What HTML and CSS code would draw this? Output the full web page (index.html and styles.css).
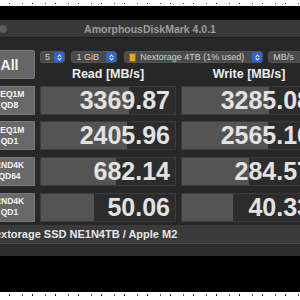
FILE: index.html
```html
<!DOCTYPE html>
<html lang="en">
<head>
    <meta charset="UTF-8">
    <title>AmorphousDiskMark 4.0.1</title>
    <link rel="stylesheet" href="styles.css">
</head>
<body>
    <div class="strip"></div>

    <div class="stage">
        <div class="window">
            <div class="titlebar">
                <span class="light"></span>
                <span class="title">AmorphousDiskMark 4.0.1</span>
            </div>

            <div class="content">
                <div class="grid">
                    <button class="all-button">All</button>

                    <div class="controls">
                        <div class="selects">
                            <div class="select s-count"><span>5</span><i class="stepper"></i></div>
                            <div class="select s-size"><span>1 GiB</span><i class="stepper"></i></div>
                            <div class="select s-disk"><b class="drive"></b><span>Nextorage 4TB (1% used)</span><i class="stepper"></i></div>
                            <div class="select s-unit"><span>MB/s</span></div>
                        </div>
                        <div class="heads">
                            <div class="head">Read [MB/s]</div>
                            <div class="head">Write [MB/s]</div>
                        </div>
                    </div>

                    <div class="label">SEQ1M<br>QD8</div>
                    <div class="cell"><div class="bar" style="width: 88px"></div><span class="value">3369.87</span></div>
                    <div class="cell"><div class="bar" style="width: 87px"></div><span class="value">3285.08</span></div>

                    <div class="label">SEQ1M<br>QD1</div>
                    <div class="cell"><div class="bar" style="width: 86px"></div><span class="value">2405.96</span></div>
                    <div class="cell"><div class="bar" style="width: 86px"></div><span class="value">2565.16</span></div>

                    <div class="label">RND4K<br>QD64</div>
                    <div class="cell"><div class="bar" style="width: 75px"></div><span class="value">682.14</span></div>
                    <div class="cell"><div class="bar" style="width: 67px"></div><span class="value">284.57</span></div>

                    <div class="label">RND4K<br>QD1</div>
                    <div class="cell"><div class="bar" style="width: 53px"></div><span class="value">50.06</span></div>
                    <div class="cell"><div class="bar" style="width: 51px"></div><span class="value">40.33</span></div>
                </div>

                <div class="device">Nextorage SSD NE1N4TB / Apple M2</div>
            </div>
            <div class="footer"></div>
        </div>
    </div>

    <div class="strip bottom"></div>
</body>
</html>
```

FILE: styles.css
```css
* {
    margin: 0;
    padding: 0;
    box-sizing: border-box;
}

body {
    width: 300px;
    height: 300px;
    overflow: hidden;
    background: #000;
    font-family: 'Liberation Sans', Arial, sans-serif;
    color: #e6e6e6;
}

/* dotted white strips at the top and bottom of the shot */
.strip {
    height: 6px;
    background-color: #fff;
    background-image: repeating-linear-gradient(90deg, transparent 0 9px, #222 9px 10px, transparent 10px 22px, #555 22px 23px);
    background-size: 100% 1px;
    background-repeat: no-repeat;
    background-position: 0 3px;
}

.strip.bottom {
    height: 8px;
    background-position: 0 2px;
    background-size: 100% 2px;
}

.stage {
    height: 286px;
    padding-top: 14px;
}

/* Window */
.window {
    width: 336px;
    margin-left: -18px;
    background: #272727;
}

.titlebar {
    position: relative;
    height: 18px;
    background: #383838;
    border-bottom: 1px solid #1e1e1e;
    display: flex;
    align-items: center;
    justify-content: center;
}

.light {
    position: absolute;
    left: 17px;
    top: 5px;
    width: 8px;
    height: 8px;
    border-radius: 50%;
    background: #5a5a5a;
}

.title {
    font-size: 10.5px;
    font-weight: bold;
    color: #9c9c9c;
}

.content {
    padding: 12px 0 0 5px;
}

.grid {
    display: grid;
    grid-template-columns: 48px 136px 136px;
    grid-template-rows: 29px repeat(4, 29px);
    column-gap: 5px;
    row-gap: 6.67px;
}

.all-button {
    border: 1px solid #777;
    border-radius: 2px;
    background: #666;
    color: #f2f2f2;
    font-family: inherit;
    font-size: 14px;
    font-weight: bold;
    padding-right: 3px;
}

.controls {
    grid-column: 2 / 4;
    display: flex;
    flex-direction: column;
    justify-content: space-between;
}

.selects {
    display: flex;
    gap: 6px;
    margin-top: 1px;
}

.select {
    height: 12px;
    display: flex;
    align-items: center;
    background: #4a4a4a;
    border: 1px solid #555;
    border-radius: 3px;
    font-size: 9px;
    color: #cfcfcf;
    padding-left: 4px;
}

.select span {
    flex-grow: 1;
}

.s-count { width: 26px; }
.s-size { width: 47px; }
.s-disk { width: 143px; margin-left: 1px; }
.s-unit { width: 50px; margin-left: -1px; }

.stepper {
    position: relative;
    width: 10px;
    height: 10px;
    border-radius: 2px;
    background: #2d62d8;
}

.stepper::before,
.stepper::after {
    content: '';
    position: absolute;
    left: 3.5px;
    width: 2px;
    height: 2px;
    border-left: 1px solid #fff;
    border-top: 1px solid #fff;
}

.stepper::before {
    top: 2.5px;
    transform: rotate(45deg);
}

.stepper::after {
    top: 5px;
    transform: rotate(-135deg);
}

.drive {
    width: 7px;
    height: 9px;
    margin-right: 4px;
    background: #e6a428;
    border: 1px solid #9a6a10;
    border-radius: 1px;
}

.heads {
    display: grid;
    grid-template-columns: 136px 136px;
    column-gap: 5px;
    margin-bottom: -2px;
}

.head {
    text-align: center;
    font-size: 12.5px;
    font-weight: bold;
    color: #ececec;
}

/* Result rows */
.label {
    display: flex;
    align-items: center;
    justify-content: center;
    text-align: center;
    padding-right: 3px;
    background: #696969;
    border: 1px solid #7a7a7a;
    font-size: 8.5px;
    font-weight: bold;
    line-height: 1.3;
    color: #f2f2f2;
}

.cell {
    position: relative;
    display: flex;
    align-items: center;
    justify-content: flex-end;
    padding-right: 5px;
    background: #2c2c2c;
    border: 1px solid #3b3b3b;
}

.bar {
    position: absolute;
    left: 0;
    top: 0;
    bottom: 0;
    background: #545454;
}

.value {
    position: relative;
    font-size: 25px;
    font-weight: bold;
    color: #e2e2e2;
}

.device {
    margin-top: 3px;
    height: 19px;
    line-height: 19px;
    background: #3a3a3a;
    border-bottom: 1px solid #4c4c4c;
    font-size: 11px;
    font-weight: bold;
    color: #e6e6e6;
}

.footer {
    height: 12px;
    background: #2d2d2d;
}
```
